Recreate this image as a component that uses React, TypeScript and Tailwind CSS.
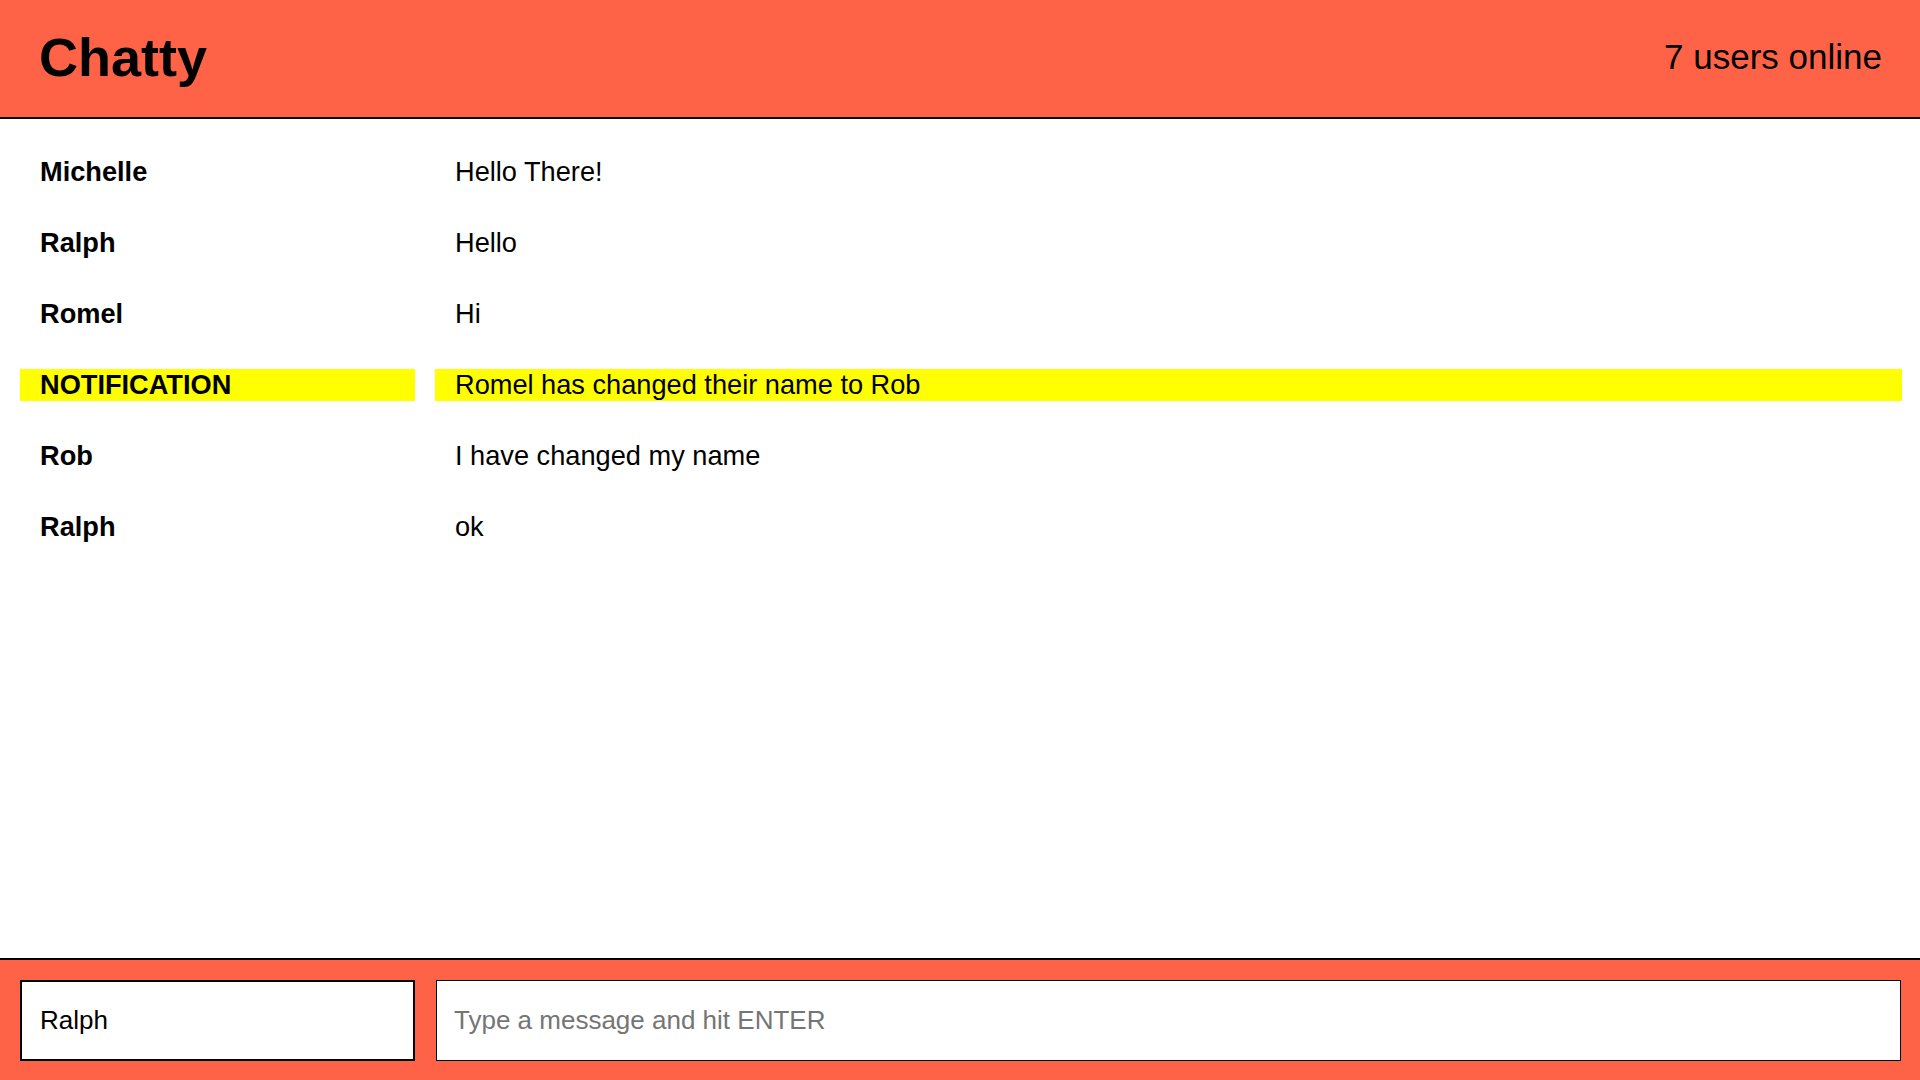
import React, { useState } from "react";

interface Message {
  id: number;
  username: string;
  content: string;
  type: "message" | "notification";
}

const initialMessages: Message[] = [
  { id: 1, username: "Michelle", content: "Hello There!", type: "message" },
  { id: 2, username: "Ralph", content: "Hello", type: "message" },
  { id: 3, username: "Romel", content: "Hi", type: "message" },
  { id: 4, username: "NOTIFICATION", content: "Romel has changed their name to Rob", type: "notification" },
  { id: 5, username: "Rob", content: "I have changed my name", type: "message" },
  { id: 6, username: "Ralph", content: "ok", type: "message" },
];

const MessageRow: React.FC<{ message: Message }> = ({ message }) => {
  const highlight = message.type === "notification" ? "bg-[#ffff00]" : "";
  return (
    <div className="flex gap-[20px] text-[27.2px] leading-[32px] text-black">
      <span className={`w-[395px] shrink-0 pl-[20px] font-bold ${highlight}`}>{message.username}</span>
      <span className={`flex-1 pl-[20px] ${highlight}`}>{message.content}</span>
    </div>
  );
};

export default function App() {
  const [messages, setMessages] = useState<Message[]>(initialMessages);
  const [name, setName] = useState("Ralph");
  const [draft, setDraft] = useState("");

  const handleKeyDown = (e: React.KeyboardEvent<HTMLInputElement>) => {
    if (e.key === "Enter" && draft.trim()) {
      setMessages((prev) => [
        ...prev,
        { id: prev.length + 1, username: name || "Anonymous", content: draft, type: "message" },
      ]);
      setDraft("");
    }
  };

  return (
    <div className="flex h-screen flex-col bg-white font-['Liberation_Sans',Arial,sans-serif]">
      <nav className="flex h-[119px] shrink-0 items-center justify-between border-b-2 border-black bg-[#ff6347] pb-[4px] pl-[39px] pr-[38px]">
        <h1 className="text-[54px] font-bold leading-none text-black">Chatty</h1>
        <span className="text-[35px] leading-none text-black">7 users online</span>
      </nav>

      <main className="flex flex-1 flex-col gap-[39px] overflow-hidden pl-[20px] pr-[18px] pt-[37px]">
        {messages.map((m) => (
          <MessageRow key={m.id} message={m} />
        ))}
      </main>

      <footer className="flex h-[122px] shrink-0 gap-[21px] border-t-2 border-black bg-[#ff6347] pb-[19px] pl-[20px] pr-[19px] pt-[20px]">
        <input
          value={name}
          onChange={(e) => setName(e.target.value)}
          placeholder="Your Name (Optional)"
          className="h-[81px] w-[395px] shrink-0 border-2 border-black bg-white pl-[18px] text-[26px] text-black outline-none placeholder:text-[#757575]"
        />
        <input
          autoFocus
          value={draft}
          onChange={(e) => setDraft(e.target.value)}
          onKeyDown={handleKeyDown}
          placeholder="Type a message and hit ENTER"
          className="h-[81px] flex-1 border border-black bg-white pl-[17px] text-[26px] text-black outline-none placeholder:text-[#757575]"
        />
      </footer>
    </div>
  );
}
